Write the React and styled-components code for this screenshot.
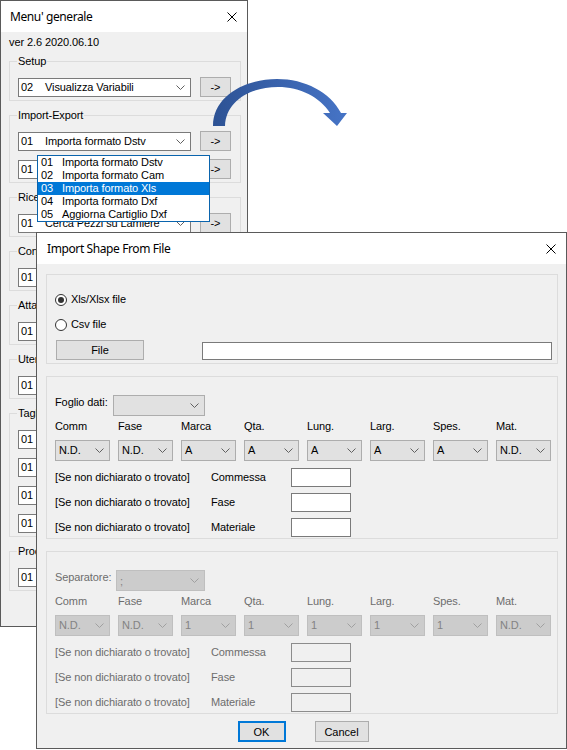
import React from "react";
import styled, { createGlobalStyle } from "styled-components";

const GlobalStyle = createGlobalStyle`
  html, body { margin: 0; padding: 0; background: #fff; }
  body {
    font-family: "Liberation Sans", Arial, sans-serif; font-size: 11px; color: #000;
    letter-spacing: -0.1px;
  }
  * { box-sizing: border-box; }
`;

const Desktop = styled.div`
  position: relative; width: 567px; height: 750px; overflow: hidden; background: #fff;
`;

// windows sit on a free desktop, so their place is the content itself
const Window = styled.div`
  position: absolute; left: ${(p) => p.$x}px; top: ${(p) => p.$y}px;
  width: ${(p) => p.$w}px; height: ${(p) => p.$h}px; z-index: ${(p) => p.$z};
  border: 1px solid #5a5a5a; background: #f0f0f0;
  display: flex; flex-direction: column;
`;

const TitleBar = styled.div`
  height: 31px; flex-shrink: 0; background: #fff;
  display: flex; align-items: center; justify-content: space-between;
  padding: 0 10px 0 ${(p) => p.$pad}px;
  font-family: "Noto Sans", "Liberation Sans", sans-serif; font-size: 12px; letter-spacing: -0.4px;
`;

/* ---------- Menu' generale ---------- */

const MenuBody = styled.div`
  flex: 1; display: flex; flex-direction: column; align-items: flex-start;
  padding: 4px 0 0 8px;
`;
const Version = styled.div` line-height: 13px; margin-bottom: 5px; `;

const Group = styled.fieldset`
  margin: 0 0 7px; padding: 9px 8px 3px; width: 232px; min-width: 0;
  border: 1px solid #dcdcdc;
  display: flex; flex-direction: column; gap: 8px;
`;
const Legend = styled.legend`
  padding: 0 1px; margin-left: -1px; line-height: 14px; font-size: 11px;
`;

const MenuRow = styled.div` display: flex; align-items: center; gap: 9px; height: 20px; `;
const MenuCombo = styled.div`
  width: 173px; height: 19px; background: #fff; border: 1px solid #7a7a7a;
  display: flex; align-items: center; padding: 0 5px 0 2px; white-space: nowrap; overflow: hidden;
`;
const Code = styled.span` display: inline-block; width: ${(p) => p.$w}px; flex-shrink: 0; `;
const ComboArrow = styled.span` margin-left: auto; display: flex; `;
const GoButton = styled.button`
  width: 31px; height: 20px; padding: 0; background: #e1e1e1; border: 1px solid #adadad;
  font: inherit; color: #000;
`;

const DropList = styled.ul`
  position: absolute; left: 37px; top: 155px; z-index: 2; width: 173px;
  margin: 0; padding: 0; list-style: none; background: #fff; border: 1px solid #0a64ad;
`;
const DropItem = styled.li`
  height: 13px; line-height: 13px; padding-left: 3px; display: flex; white-space: nowrap;
  background: ${(p) => (p.$active ? "#0078d7" : "transparent")};
  color: ${(p) => (p.$active ? "#fff" : "#000")};
`;

const ArrowSvg = styled.svg` position: absolute; left: 200px; top: 70px; z-index: 4; `;

/* ---------- Import Shape From File ---------- */

const DialogBody = styled.div`
  flex: 1; display: flex; flex-direction: column; padding: 10px 8px 0 9px;
`;
const Panel = styled.div`
  border: 1px solid #dcdcdc; display: flex; flex-direction: column;
  padding: 18px 5px ${(p) => p.$pb}px 8px; margin-top: ${(p) => p.$mt}px;
  color: ${(p) => (p.$disabled ? "#6d6d6d" : "#000")};
`;

const RadioRow = styled.label`
  display: flex; align-items: center; gap: 4px; height: 13px; line-height: 13px;
  margin-top: ${(p) => p.$mt}px;
`;
const RadioDot = styled.span`
  width: 12px; height: 12px; border-radius: 50%; border: 1px solid #333; background: #fff;
  display: inline-flex; align-items: center; justify-content: center;
  &::after {
    content: ""; width: 6px; height: 6px; border-radius: 50%;
    background: ${(p) => (p.$on ? "#333" : "transparent")};
  }
`;

const FileRow = styled.div` display: flex; align-items: flex-end; margin-top: 9px; `;
const FileButton = styled.button`
  width: 88px; height: 20px; margin-left: 1px; padding: 0;
  background: #e1e1e1; border: 1px solid #adadad; font: inherit; color: #000;
`;
const TextBox = styled.div`
  width: ${(p) => p.$w}px; height: ${(p) => p.$h}px; margin-left: ${(p) => (p.$auto ? "auto" : "0")};
  background: ${(p) => (p.$disabled ? "#f0f0f0" : "#fff")};
  border: 1px solid ${(p) => (p.$disabled ? "#8c8c8c" : "#7a7a7a")};
`;

const SheetRow = styled.div` display: flex; height: 21px; `;
const SheetLabel = styled.span` width: ${(p) => p.$w}px; line-height: 13px; margin-top: 1px; `;

const Select = styled.div`
  width: ${(p) => (p.$w ? `${p.$w}px` : "auto")}; height: 21px;
  display: flex; align-items: center; justify-content: space-between; padding: 0 5px 0 3px;
  background: ${(p) => (p.$disabled ? "#cccccc" : "#e1e1e1")};
  border: 1px solid ${(p) => (p.$disabled ? "#bfbfbf" : "#adadad")};
  color: ${(p) => (p.$disabled ? "#838383" : "#000")};
`;

const Columns = styled.div`
  display: grid; grid-template-columns: repeat(8, 55px); column-gap: 8px;
  margin-top: ${(p) => p.$mt}px; line-height: 13px;
`;

const FieldList = styled.div` display: flex; flex-direction: column; gap: 6px; margin-top: 7px; `;
const FieldRow = styled.div`
  display: grid; grid-template-columns: 156px 80px 60px; align-items: center; height: 19px;
  line-height: 13px;
`;

const Actions = styled.div`
  display: flex; justify-content: center; gap: 29px; margin-top: 7px; padding-left: 2px;
`;
const DlgButton = styled.button`
  width: ${(p) => p.$w}px; height: 21px; padding: 0; font: inherit; color: #000;
  background: #e1e1e1;
  border: ${(p) => (p.$default ? "2px solid #0078d7" : "1px solid #adadad")};
`;

const Chevron = ({ color = "#606060" }) => (
  <svg width="9" height="5" viewBox="0 0 9 5">
    <polyline points="0.5,0.5 4.5,4.5 8.5,0.5" fill="none" stroke={color} strokeWidth="1" />
  </svg>
);

const CloseIcon = () => (
  <svg width="10" height="10" viewBox="0 0 10 10">
    <path d="M0.5 0.5L9.5 9.5M9.5 0.5L0.5 9.5" stroke="#000" strokeWidth="1" />
  </svg>
);

const menuGroups = [
  { title: "Setup", rows: [["02", "Visualizza Variabili"]] },
  { title: "Import-Export", rows: [["01", "Importa formato Dstv"], ["01", "Esporta formato Dstv"]] },
  { title: "Ricerca", rows: [["01", "Cerca Pezzi su Lamiere"]] },
  { title: "Controlli", rows: [["01", "Controlla Pezzi"]] },
  { title: "Attacchi", rows: [["01", "Visualizza Attacchi"]] },
  { title: "Utenti", rows: [["01", "Gestione Utenti"]] },
  { title: "Taglio", rows: [["01", "Taglio Lamiere"], ["01", "Taglio Profili"], ["01", "Nesting"], ["01", "Report Taglio"]] },
  { title: "Procedure", rows: [["01", "Procedure Varie"]] },
];

const dropItems = [
  ["01", "Importa formato Dstv"],
  ["02", "Importa formato Cam"],
  ["03", "Importa formato Xls"],
  ["04", "Importa formato Dxf"],
  ["05", "Aggiorna Cartiglio Dxf"],
];

const columns = ["Comm", "Fase", "Marca", "Qta.", "Lung.", "Larg.", "Spes.", "Mat."];
const fields = ["Commessa", "Fase", "Materiale"];

const DataGroup = ({ disabled, sheetLabel, labelWidth, sheetWidth, sheetValue, values }) => (
  <Panel $mt={12} $pb={1} $disabled={disabled}>
    <SheetRow>
      <SheetLabel $w={labelWidth}>{sheetLabel}</SheetLabel>
      <Select $w={sheetWidth} $disabled={disabled}>
        <span>{sheetValue}</span>
        <Chevron color={disabled ? "#a0a0a0" : "#606060"} />
      </Select>
    </SheetRow>
    <Columns $mt={4}>
      {columns.map((c) => <span key={c}>{c}</span>)}
    </Columns>
    <Columns $mt={7}>
      {values.map((v, i) => (
        <Select key={i} $disabled={disabled}>
          <span>{v}</span>
          <Chevron color={disabled ? "#a0a0a0" : "#606060"} />
        </Select>
      ))}
    </Columns>
    <FieldList>
      {fields.map((f) => (
        <FieldRow key={f}>
          <span>[Se non dichiarato o trovato]</span>
          <span>{f}</span>
          <TextBox $w={60} $h={19} $disabled={disabled} />
        </FieldRow>
      ))}
    </FieldList>
  </Panel>
);

export default function App() {
  return (
    <Desktop>
      <GlobalStyle />

      <Window $x={0} $y={0} $w={248} $h={627} $z={1}>
        <TitleBar $pad={9}>
          <span>Menu' generale</span>
          <CloseIcon />
        </TitleBar>
        <MenuBody>
          <Version>ver 2.6 2020.06.10</Version>
          {menuGroups.map((g) => (
            <Group key={g.title}>
              <Legend>{g.title}</Legend>
              {g.rows.map(([code, label], i) => (
                <MenuRow key={i}>
                  <MenuCombo>
                    <Code $w={24}>{code}</Code>
                    <span>{label}</span>
                    <ComboArrow><Chevron /></ComboArrow>
                  </MenuCombo>
                  <GoButton>-&gt;</GoButton>
                </MenuRow>
              ))}
            </Group>
          ))}
        </MenuBody>
      </Window>

      <DropList>
        {dropItems.map(([code, label]) => (
          <DropItem key={code} $active={code === "03"}>
            <Code $w={21}>{code}</Code>
            <span>{label}</span>
          </DropItem>
        ))}
      </DropList>

      <ArrowSvg width="160" height="65" viewBox="0 0 160 65">
        <defs>
          <linearGradient id="arc" x1="0" y1="0" x2="1" y2="0">
            <stop offset="0" stopColor="#2d5294" />
            <stop offset="1" stopColor="#4674c6" />
          </linearGradient>
        </defs>
        <path
          d="M13,56 C13,26 45,9 77,9 C105,9 130,22 141,43 L147,43 L137,56 L123,43 L130,43 C120,27 100,17 78,17 C50,17 26,31 25,56 Z"
          fill="url(#arc)"
        />
      </ArrowSvg>

      <Window $x={36} $y={232} $w={531} $h={517} $z={3}>
        <TitleBar $pad={10}>
          <span>Import Shape From File</span>
          <CloseIcon />
        </TitleBar>
        <DialogBody>
          <Panel $mt={0} $pb={3}>
            <RadioRow $mt={0}><RadioDot $on />Xls/Xlsx file</RadioRow>
            <RadioRow $mt={12}><RadioDot />Csv file</RadioRow>
            <FileRow>
              <FileButton>File</FileButton>
              <TextBox $w={350} $h={18} $auto />
            </FileRow>
          </Panel>
          <DataGroup
            sheetLabel="Foglio dati:" labelWidth={58} sheetWidth={92} sheetValue=""
            values={["N.D.", "N.D.", "A", "A", "A", "A", "A", "N.D."]}
          />
          <DataGroup
            disabled sheetLabel="Separatore:" labelWidth={61} sheetWidth={89} sheetValue=";"
            values={["N.D.", "N.D.", "1", "1", "1", "1", "1", "N.D."]}
          />
          <Actions>
            <DlgButton $w={48} $default>OK</DlgButton>
            <DlgButton $w={54}>Cancel</DlgButton>
          </Actions>
        </DialogBody>
      </Window>
    </Desktop>
  );
}
